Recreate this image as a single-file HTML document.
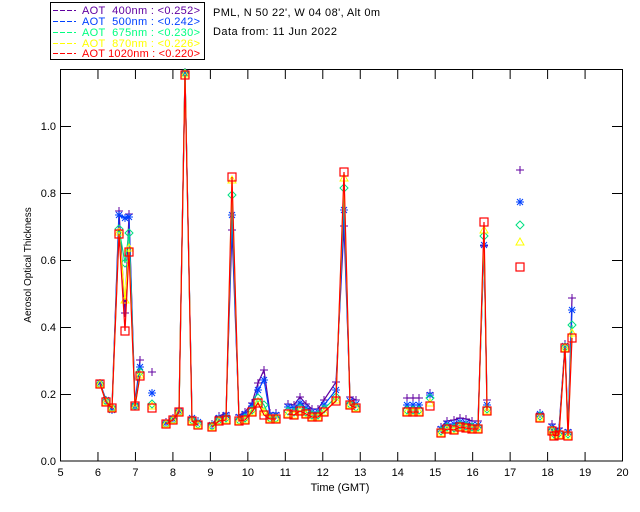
<!DOCTYPE html>
<html><head><meta charset="utf-8"><style>
html,body{margin:0;padding:0;background:#fff;}
svg{display:block;font-family:"Liberation Sans",sans-serif;}
</style></head><body>
<svg id="s" width="640" height="512" xmlns="http://www.w3.org/2000/svg">
<rect x="0" y="0" width="640" height="512" fill="#fff"/>
<rect x="50.5" y="2.5" width="154" height="57" fill="#fff" stroke="#000" stroke-width="1"/>
<g font-size="11">
<g stroke-width="1" stroke-dasharray="5,2">
<line x1="53" y1="10.5" x2="76" y2="10.5" stroke="#6000a0"/>
<line x1="53" y1="21.5" x2="76" y2="21.5" stroke="#0040ff"/>
<line x1="53" y1="32.5" x2="76" y2="32.5" stroke="#00ff80"/>
<line x1="53" y1="43.5" x2="76" y2="43.5" stroke="#ffff00"/>
<line x1="53" y1="53.5" x2="76" y2="53.5" stroke="#ff0000"/>
</g>
<text x="82" y="14" fill="#6000a0" textLength="118" lengthAdjust="spacing" xml:space="preserve">AOT  400nm : &lt;0.252&gt;</text>
<text x="82" y="25" fill="#0040ff" textLength="118" lengthAdjust="spacing" xml:space="preserve">AOT  500nm : &lt;0.242&gt;</text>
<text x="82" y="36" fill="#00ff80" textLength="118" lengthAdjust="spacing" xml:space="preserve">AOT  675nm : &lt;0.230&gt;</text>
<text x="82" y="47" fill="#ffff00" textLength="118" lengthAdjust="spacing" xml:space="preserve">AOT  870nm : &lt;0.226&gt;</text>
<text x="82" y="57" fill="#ff0000" textLength="118" lengthAdjust="spacing" xml:space="preserve">AOT 1020nm : &lt;0.220&gt;</text>
<text x="213" y="16" fill="#000" textLength="167" lengthAdjust="spacing">PML, N 50 22', W 04 08', Alt 0m</text>
<text x="213" y="35" fill="#000" textLength="124" lengthAdjust="spacing">Data from: 11 Jun 2022</text>
</g>
<rect x="60.5" y="69.5" width="562" height="391.5" fill="none" stroke="#000" stroke-width="1"/>
<g id="ax" stroke="#000" stroke-width="1"></g>
<g id="lbl" font-size="11" fill="#000"></g>
<text x="340" y="491" font-size="11" text-anchor="middle">Time (GMT)</text>
<text transform="translate(31,265) rotate(-90)" font-size="10" text-anchor="middle">Aerosol Optical Thickness</text>
<g id="d"></g>
</svg>
<script>
var NS="http://www.w3.org/2000/svg";
function el(p,t,a,txt){var e=document.createElementNS(NS,t);for(var k in a)e.setAttribute(k,a[k]);if(txt!=null)e.textContent=txt;p.appendChild(e);return e;}
var ax=document.getElementById('ax'),lb=document.getElementById('lbl'),d=document.getElementById('d');
for(var h=5;h<=20;h++){var x=60.5+(h-5)*37.47;
 if(h>5&&h<20){el(ax,'line',{x1:x,y1:461,x2:x,y2:452});el(ax,'line',{x1:x,y1:70,x2:x,y2:79});}
 el(lb,'text',{x:x,y:476,'text-anchor':'middle'},String(h));}
for(var i=0;i<=5;i++){var v=i*0.2,y=461-v*335;
 if(i>0){el(ax,'line',{x1:61,y1:y+0.5,x2:71,y2:y+0.5});el(ax,'line',{x1:622,y1:y+0.5,x2:612,y2:y+0.5});}
 el(lb,'text',{x:56,y:y+4,'text-anchor':'end'},v.toFixed(1));}
var segs=[
[[100,384,[383,383,384,384]],[106,402,[400,400,401,402]],[112,408,[406,410,408,408]],[119,234,[211,215,229,232]],[125,331,[313,218,263,300]],[129,252,[214,217,233,248]],[135,406,[404,406,406,407]],[140,376,[360,367,372,375]]],
[[152,408,[372,393,404,406]]],
[[166,424,[422,423,424,424]],[173,420,[418,419,420,420]],[179,412,[410,411,412,412]],[185,75,[72,73,73,74]],[192,421,[417,418,420,421]],[198,425,[421,422,424,425]]],
[[212,427,[424,425,426,427]],[219,421,[416,418,420,421]],[226,420,[413,415,418,420]],[232,177,[230,215,195,180]],[239,421,[415,417,420,421]],[245,420,[412,414,418,420]],[252,412,[403,406,410,412]],[258,403,[383,390,398,402]],[264,415,[370,380,405,412]],[270,419,[413,415,418,419]],[276,419,[413,415,418,419]]],
[[288,414,[404,407,411,414]],[294,415,[405,408,412,415]],[300,411,[397,403,408,411]],[306,414,[404,408,412,414]],[312,417,[409,412,415,417]],[318,417,[409,412,415,417]],[324,412,[400,405,409,412]],[336,401,[382,390,397,400]],[344,172,[226,210,188,178]],[350,405,[397,401,404,405]],[356,408,[400,404,407,408]]],
[[407,412,[398,405,410,412]],[413,412,[398,405,410,412]],[419,412,[398,405,410,412]]],[[430,406,[393,395,398,403]]],
[[441,433,[427,429,431,433]],[447,429,[421,424,427,429]],[454,430,[420,424,428,430]],[460,427,[418,422,425,427]],[466,428,[419,423,426,428]],[472,429,[421,425,427,429]],[478,429,[421,425,427,429]],[484,222,[246,245,236,230]],[487,411,[400,405,409,411]]],
[[540,418,[413,414,416,418]]],
[[552,431,[424,427,430,431]],[554,436,[430,432,434,436]],[559,435,[428,431,433,435]],[565,348,[344,346,347,348]],[568,436,[430,432,434,436]],[572,338,[298,310,325,333]]]];
var cols=['#6000a0','#0040ff','#00e080','#ffff00','#ff0000'];
for(var k=0;k<5;k++){
 segs.forEach(function(s){
  var pts=s.map(function(p){return [p[0], k==4?p[1]:p[2][k]];});
  if(pts.length>1)el(d,'polyline',{points:pts.map(function(p){return p.join(',')}).join(' '),fill:'none',stroke:cols[k],'stroke-width':1.2});
  pts.forEach(function(p){mark(k,p[0],p[1]);});
 });
}
function mark(k,x,y){var c=cols[k];
 if(k==0){el(d,'path',{d:'M'+(x-4)+' '+y+'h8M'+x+' '+(y-4)+'v8',stroke:c,fill:'none'});}
 else if(k==1){el(d,'path',{d:'M'+(x-4)+' '+y+'h8M'+x+' '+(y-4)+'v8M'+(x-3)+' '+(y-3)+'l6 6M'+(x+3)+' '+(y-3)+'l-6 6',stroke:c,fill:'none'});}
 else if(k==2){el(d,'path',{d:'M'+x+' '+(y-4)+'l4 4l-4 4l-4 -4z',stroke:c,fill:'none'});}
 else if(k==3){el(d,'path',{d:'M'+x+' '+(y-4)+'l4 7h-8z',stroke:c,fill:'none'});}
 else {el(d,'rect',{x:x-4,y:y-4,width:8,height:8,stroke:c,fill:'none','stroke-width':1.2});}
}
mark(0,520,170);mark(1,520,202);mark(2,520,225);mark(3,520,242);mark(4,520,267);
</script>
</body></html>
